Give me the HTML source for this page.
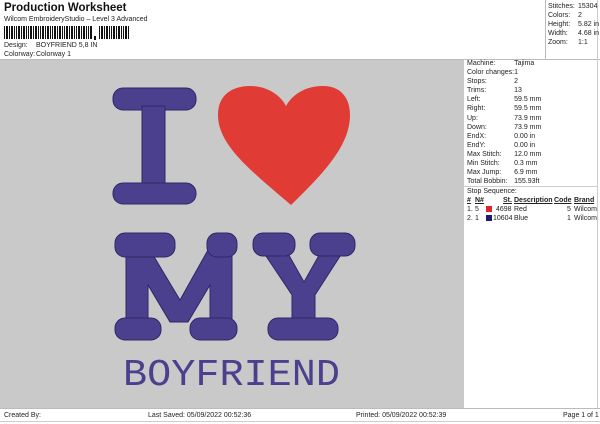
<!DOCTYPE html>
<html><head><meta charset="utf-8"><style>
*{margin:0;padding:0;box-sizing:border-box}
body{width:600px;height:424px;background:#fff;position:relative;overflow:hidden;font-family:"Liberation Sans",sans-serif;color:#222;font-size:7px}
.a{position:absolute;white-space:nowrap;line-height:9px}
.r td{padding:0;line-height:9.1px;height:9.1px;font-size:7px;white-space:nowrap}
</style></head><body>
<div class="a" style="left:4px;top:1px;font-size:11.5px;font-weight:bold;line-height:14px;color:#111">Production Worksheet</div>
<div class="a" style="left:4px;top:15px">Wilcom EmbroideryStudio – Level 3 Advanced</div>
<svg class="a" style="left:4px;top:26px" width="130" height="14">
<g fill="#111">
<rect x="0" y="0" width="1" height="13"/><rect x="2" y="0" width="2" height="13"/><rect x="5" y="0" width="1" height="13"/><rect x="7" y="0" width="2" height="13"/><rect x="10" y="0" width="1" height="13"/><rect x="12" y="0" width="1" height="13"/><rect x="14" y="0" width="2" height="13"/><rect x="17" y="0" width="1" height="13"/><rect x="19" y="0" width="2" height="13"/><rect x="22" y="0" width="1" height="13"/><rect x="24" y="0" width="1" height="13"/><rect x="26" y="0" width="2" height="13"/><rect x="29" y="0" width="1" height="13"/><rect x="31" y="0" width="2" height="13"/><rect x="34" y="0" width="1" height="13"/><rect x="36" y="0" width="1" height="13"/><rect x="38" y="0" width="2" height="13"/><rect x="41" y="0" width="1" height="13"/><rect x="43" y="0" width="2" height="13"/><rect x="46" y="0" width="1" height="13"/><rect x="48" y="0" width="1" height="13"/><rect x="50" y="0" width="2" height="13"/><rect x="53" y="0" width="1" height="13"/><rect x="55" y="0" width="2" height="13"/><rect x="58" y="0" width="1" height="13"/><rect x="60" y="0" width="1" height="13"/><rect x="62" y="0" width="2" height="13"/><rect x="65" y="0" width="1" height="13"/><rect x="67" y="0" width="2" height="13"/><rect x="70" y="0" width="1" height="13"/><rect x="72" y="0" width="1" height="13"/><rect x="74" y="0" width="2" height="13"/><rect x="77" y="0" width="1" height="13"/><rect x="79" y="0" width="2" height="13"/><rect x="82" y="0" width="1" height="13"/><rect x="84" y="0" width="1" height="13"/><rect x="86" y="0" width="2" height="13"/>
<rect x="90" y="10" width="2" height="4"/>
<rect x="95" y="0" width="1" height="13"/><rect x="97" y="0" width="2" height="13"/><rect x="100" y="0" width="1" height="13"/><rect x="102" y="0" width="2" height="13"/><rect x="105" y="0" width="1" height="13"/><rect x="107" y="0" width="1" height="13"/><rect x="109" y="0" width="2" height="13"/><rect x="112" y="0" width="1" height="13"/><rect x="114" y="0" width="2" height="13"/><rect x="117" y="0" width="1" height="13"/><rect x="119" y="0" width="1" height="13"/><rect x="121" y="0" width="2" height="13"/><rect x="124" y="0" width="1" height="13"/>
</g></svg>
<div class="a" style="left:4px;top:41px">Design:</div><div class="a" style="left:36px;top:41px">BOYFRIEND 5,8 IN</div>
<div class="a" style="left:4px;top:50px">Colorway:</div><div class="a" style="left:36px;top:50px">Colorway 1</div>
<div class="a" style="left:0;top:59px;width:600px;height:1px;background:#bbb"></div>
<div class="a" style="left:0;top:60px;width:464px;height:348px;background:#c9c9c9"></div>
<div class="a" style="left:545px;top:0;width:1px;height:59px;background:#bbb"></div>
<div class="a" style="left:597px;top:0;width:1px;height:408px;background:#ccc"></div>
<div class="a" style="left:548px;top:2px">Stitches:</div><div class="a" style="left:578px;top:2px">15304</div>
<div class="a" style="left:548px;top:11px">Colors:</div><div class="a" style="left:578px;top:11px">2</div>
<div class="a" style="left:548px;top:20px">Height:</div><div class="a" style="left:578px;top:20px">5.82 in</div>
<div class="a" style="left:548px;top:29px">Width:</div><div class="a" style="left:578px;top:29px">4.68 in</div>
<div class="a" style="left:548px;top:38px">Zoom:</div><div class="a" style="left:578px;top:38px">1:1</div>
<table class="a r" style="left:467px;top:59px;border-collapse:collapse">
<tr><td style="width:47px">Machine:</td><td>Tajima</td></tr><tr><td>Color changes:</td><td>1</td></tr><tr><td>Stops:</td><td>2</td></tr><tr><td>Trims:</td><td>13</td></tr><tr><td>Left:</td><td>59.5 mm</td></tr><tr><td>Right:</td><td>59.5 mm</td></tr><tr><td>Up:</td><td>73.9 mm</td></tr><tr><td>Down:</td><td>73.9 mm</td></tr><tr><td>EndX:</td><td>0.00 in</td></tr><tr><td>EndY:</td><td>0.00 in</td></tr><tr><td>Max Stitch:</td><td>12.0 mm</td></tr><tr><td>Min Stitch:</td><td>0.3 mm</td></tr><tr><td>Max Jump:</td><td>6.9 mm</td></tr><tr><td>Total Bobbin:</td><td>155.93ft</td></tr></table>
<div class="a" style="left:464px;top:186px;width:134px;height:1px;background:#ccc"></div>
<div class="a" style="left:467px;top:187px">Stop Sequence:</div>
<div class="a" style="left:467px;top:196px;font-weight:bold;text-decoration:underline">#</div>
<div class="a" style="left:475px;top:196px;font-weight:bold;text-decoration:underline">N#</div>
<div class="a" style="left:503px;top:196px;font-weight:bold;text-decoration:underline">St.</div>
<div class="a" style="left:514px;top:196px;font-weight:bold;text-decoration:underline">Description</div>
<div class="a" style="left:554px;top:196px;font-weight:bold;text-decoration:underline">Code</div>
<div class="a" style="left:574px;top:196px;font-weight:bold;text-decoration:underline">Brand</div>
<div class="a" style="left:467px;top:205px">1.</div><div class="a" style="left:475px;top:205px">5</div><div class="a" style="left:486px;top:205px;width:6px;height:6px;background:#e0232a;margin-top:1px"></div><div class="a" style="left:496px;top:205px">4698</div><div class="a" style="left:514px;top:205px">Red</div><div class="a" style="left:567px;top:205px">5</div><div class="a" style="left:574px;top:205px">Wilcom</div>
<div class="a" style="left:467px;top:214px">2.</div><div class="a" style="left:475px;top:214px">1</div><div class="a" style="left:486px;top:214px;width:6px;height:6px;background:#1c1a6e;margin-top:1px"></div><div class="a" style="left:493px;top:214px">10604</div><div class="a" style="left:514px;top:214px">Blue</div><div class="a" style="left:567px;top:214px">1</div><div class="a" style="left:574px;top:214px">Wilcom</div>
<div class="a" style="left:0;top:408px;width:600px;height:1px;background:#bbb"></div>
<div class="a" style="left:0;top:421px;width:600px;height:1px;background:#ccc"></div>
<div class="a" style="left:4px;top:411px">Created By:</div>
<div class="a" style="left:148px;top:411px">Last Saved: 05/09/2022 00:52:36</div>
<div class="a" style="left:356px;top:411px">Printed: 05/09/2022 00:52:39</div>
<div class="a" style="left:563px;top:411px">Page 1 of 1</div>
<svg class="a" style="left:0;top:0" width="464" height="408">
<g fill="#4b408d" stroke="#2f2766" stroke-width="1">
<rect x="113" y="88" width="83" height="22" rx="10"/>
<rect x="142" y="106" width="23" height="80"/>
<rect x="113" y="183" width="83" height="21" rx="10"/>
<path d="M126 250 L150 250 L180 300 L208 250 L232 250 L232 325 L210 325 L210 285 L188 322 L170 322 L148 285 L148 325 L126 325 Z"/>
<rect x="115" y="233" width="60" height="24" rx="10"/>
<rect x="207" y="233" width="30" height="24" rx="10"/>
<rect x="115" y="318" width="46" height="22" rx="10"/>
<rect x="190" y="318" width="47" height="22" rx="10"/>
<path d="M262 250 L286 250 L304 282 L322 250 L344 250 L315 295 L315 325 L292 325 L292 295 Z"/>
<rect x="253" y="233" width="42" height="23" rx="10"/>
<rect x="310" y="233" width="45" height="23" rx="10"/>
<rect x="268" y="318" width="70" height="22" rx="10"/>
</g>
<path d="M291 205 C250 170 218 145 218 115 C218 95 232 86 250 86 C268 86 281 96 286 106 C292 95 305 86 323 86 C340 86 350 97 350 115 C350 145 325 172 291 205 Z" fill="#e03b35"/>
<text x="123" y="385" font-family="Liberation Mono, monospace" font-size="38" fill="#4b408d" textLength="217" lengthAdjust="spacingAndGlyphs">BOYFRIEND</text>
</svg>
</body></html>
